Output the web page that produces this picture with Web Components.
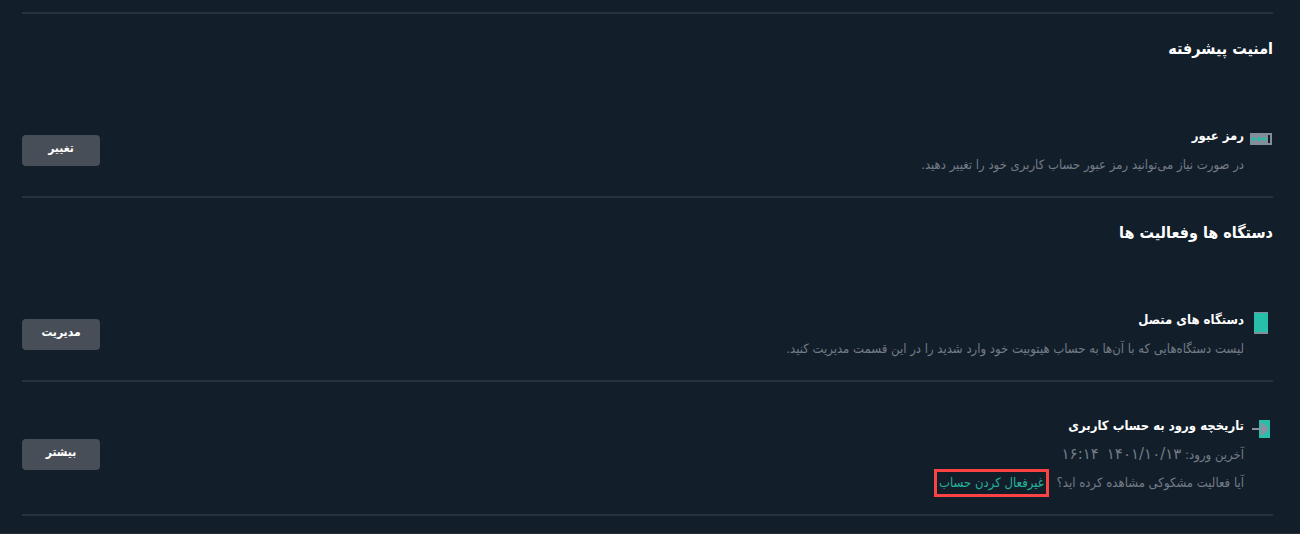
<!DOCTYPE html>
<html lang="fa" dir="rtl">
<head>
<meta charset="utf-8">
<title>امنیت پیشرفته</title>
<style>
body{margin:0;background:#121e2a;color:#fff;font-family:"DejaVu Sans Condensed","DejaVu Sans",sans-serif}
</style>
</head>
<body>
<account-settings>
  <settings-section>
    <span slot="title">امنیت پیشرفته</span>
    <settings-row action="تغییر" icon="password">
      <span slot="name">رمز عبور</span>
      <info-line>در صورت نیاز می‌توانید رمز عبور حساب کاربری خود را تغییر دهید.</info-line>
    </settings-row>
  </settings-section>
  <settings-section>
    <span slot="title">دستگاه ها وفعالیت ها</span>
    <settings-row action="مدیریت" icon="device">
      <span slot="name">دستگاه های متصل</span>
      <info-line>لیست دستگاه‌هایی که با آن‌ها به حساب هیتوبیت خود وارد شدید را در این قسمت مدیریت کنید.</info-line>
    </settings-row>
  </settings-section>
  <settings-section>
    <settings-row action="بیشتر" icon="login">
      <span slot="name">تاریخچه ورود به حساب کاربری</span>
      <info-line>آخرین ورود: <last-login date="۱۴۰۱/۱۰/۱۳" time="۱۶:۱۴"></last-login></info-line>
      <info-line>آیا فعالیت مشکوکی مشاهده کرده اید؟ <marked-link href="#disable">غیرفعال کردن حساب</marked-link></info-line>
    </settings-row>
  </settings-section>
</account-settings>

<template id="account-settings">
  <style>
    :host{display:block;padding:12px 27px 17px 22px;border-bottom:1px solid #2a2b3d}
    .list{border-bottom:2px solid #253340}
  </style>
  <div class="list"><slot></slot></div>
</template>

<template id="settings-section">
  <style>
    :host{display:block;border-top:2px solid #253340}
    h2{margin:18px 0 26px;font-size:16px;line-height:34px;font-weight:700}
    h2[hidden]{display:none}
  </style>
  <h2><slot name="title"></slot></h2>
  <slot></slot>
</template>

<template id="settings-row">
  <style>
    :host{display:flex;align-items:center;justify-content:space-between;padding:29px 0 17px}
    .main{display:flex;gap:5px;align-items:flex-start}
    svg{flex:none;width:24px;height:24px;margin-top:6px}
    h3{margin:0;font-size:13px;line-height:30px;font-weight:700}
    button{width:78px;height:31px;flex:none;border:0;border-radius:4px;padding:0 0 4px;background:#484e57;color:#fff;font:700 12px/20px "DejaVu Sans Condensed","DejaVu Sans",sans-serif}
  </style>
  <div class="main">
    <svg viewBox="0 0 24 24" aria-hidden="true"></svg>
    <div><h3><slot name="name"></slot></h3><slot></slot></div>
  </div>
  <button type="button"></button>
</template>

<template id="info-line">
  <style>:host{display:block;font-size:13px;line-height:28px;color:#747b86}</style>
  <slot></slot>
</template>

<template id="last-login">
  <style>:host{display:inline-flex;gap:8px;font:15px/20px "DejaVu Sans",sans-serif}</style>
  <bdi class="date"></bdi><bdi class="time"></bdi>
</template>

<template id="marked-link">
  <style>
    :host{display:inline-block;border:3px solid #fb4343;margin-right:4px;padding:0 2px;line-height:22px}
    a{color:#25b39c;text-decoration:none}
  </style>
  <a><slot></slot></a>
</template>

<script>
const ICONS={
  password:'<path fill="#848d9a" d="M1 6h22v12H1z"/><path fill="#121e2a" d="M19 8h2v8h-2z"/><g fill="#24bda8"><path id="s" d="M4 10h1v1h2v2H5v1H4v-1H2v-2h2z"/><path d="M9 10h2v1h1v2h-1v1H9v-1H8v-2h1zM14 10h2v1h1v2h-1v1h-2v-1h-1v-2h1z"/></g>',
  device:'<path fill="#848d9a" d="M5 1h14v22H5z"/><path fill="#28bfaa" d="M5 2h14v19H5z"/>',
  login:'<path fill="#28bfaa" d="M10 3h11v18H10z"/><path fill="#8a91a0" d="M3 11h9V6h2l5 5v2l-5 5h-2v-5H3z"/>'
};
class Base extends HTMLElement{
  constructor(){
    super();
    this.attachShadow({mode:'open'}).append(document.getElementById(this.localName).content.cloneNode(true));
  }
  $(s){return this.shadowRoot.querySelector(s)}
}
customElements.define('account-settings',class extends Base{});
customElements.define('settings-section',class extends Base{
  connectedCallback(){this.$('h2').hidden=!this.querySelector('[slot=title]')}
});
customElements.define('settings-row',class extends Base{
  connectedCallback(){
    this.$('svg').innerHTML=ICONS[this.getAttribute('icon')];
    this.$('button').textContent=this.getAttribute('action');
  }
});
customElements.define('info-line',class extends Base{});
customElements.define('last-login',class extends Base{
  connectedCallback(){
    this.$('.date').textContent=this.getAttribute('date');
    this.$('.time').textContent=this.getAttribute('time');
  }
});
customElements.define('marked-link',class extends Base{
  connectedCallback(){this.$('a').href=this.getAttribute('href')}
});
</script>
</body>
</html>
